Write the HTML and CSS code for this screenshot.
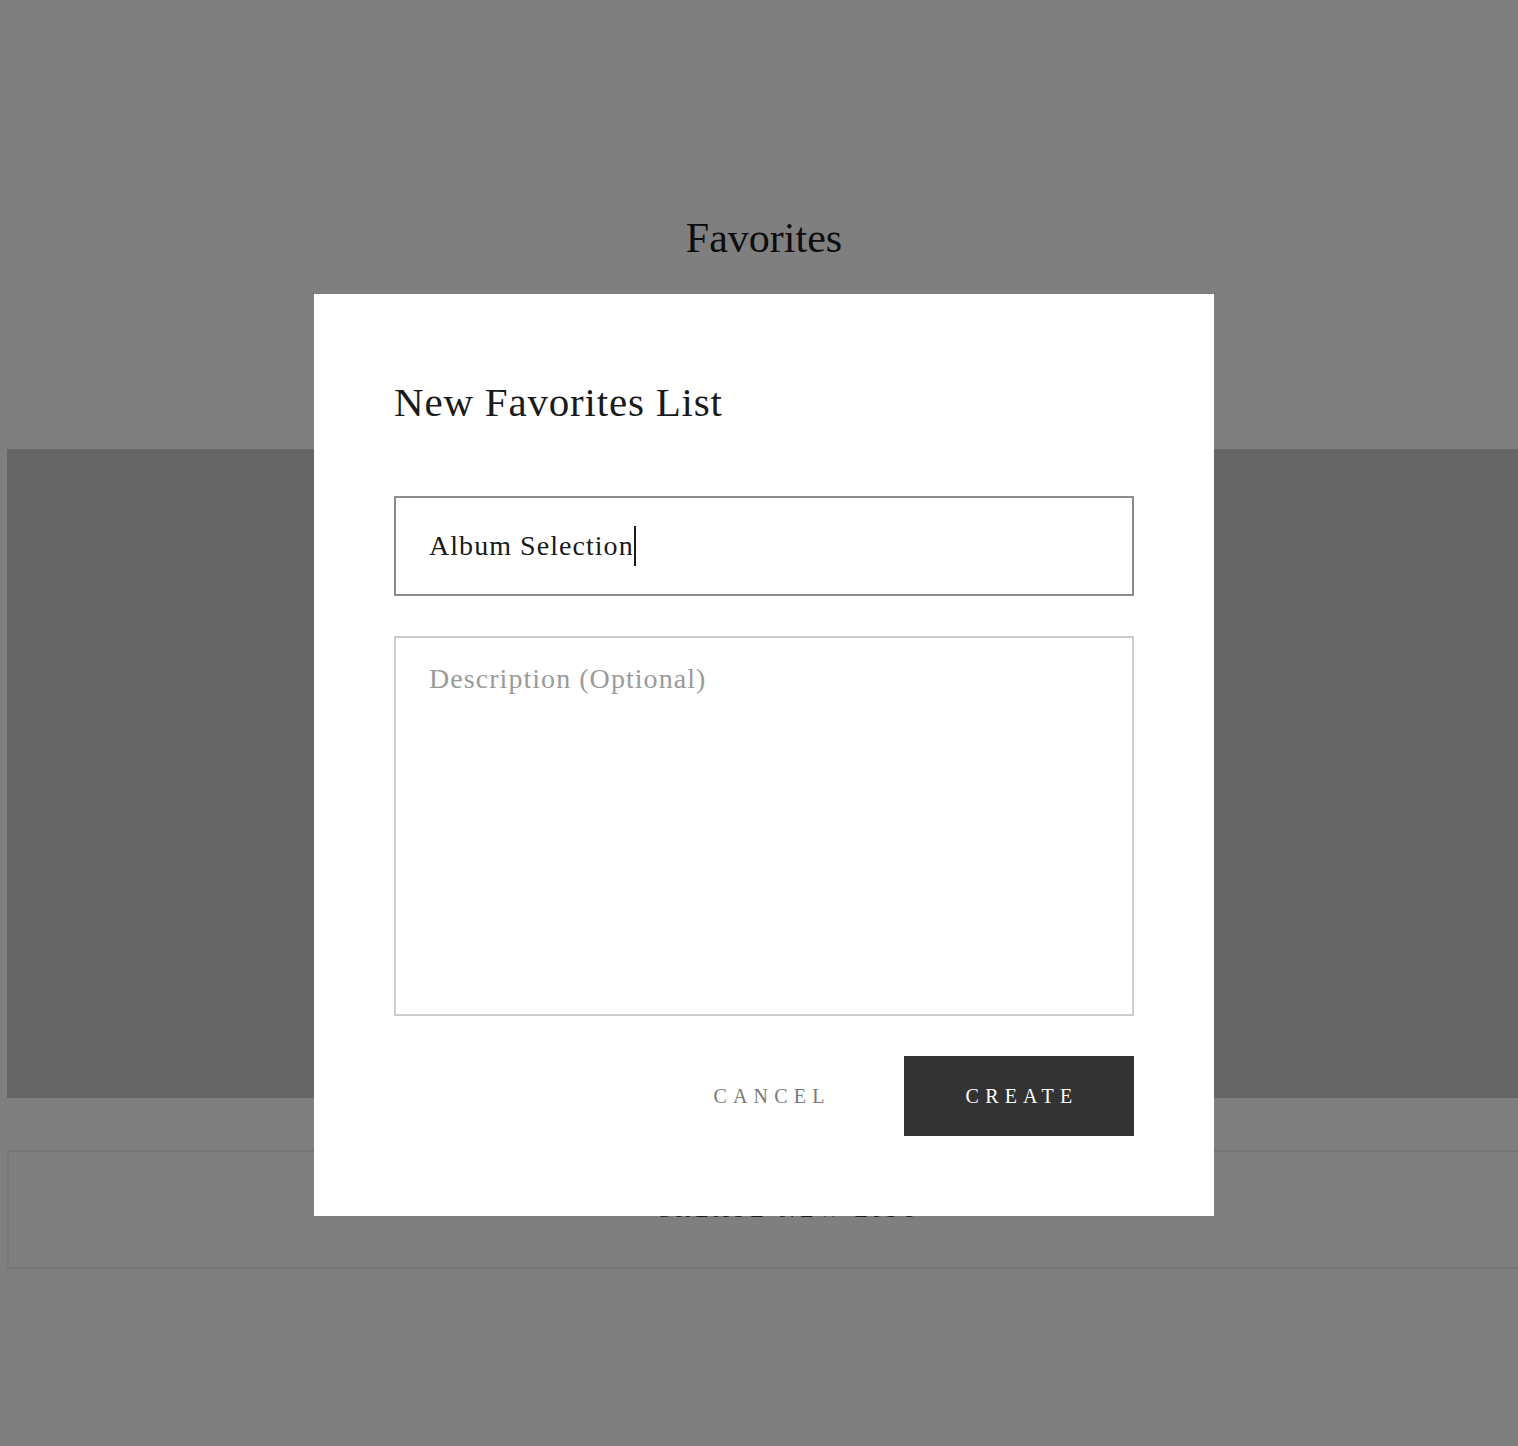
FILE: index.html
```html
<!DOCTYPE html>
<html lang="en">
<head>
<meta charset="utf-8">
<title>Favorites</title>
<link rel="stylesheet" href="styles.css">
</head>
<body>
<div class="page">
  <h1 class="page-title">Favorites</h1>
  <div class="hero"></div>
  <div class="new-list">
    <span class="plus">+</span>
    <span>CREATE NEW LIST</span>
  </div>
</div>
<div class="overlay"></div>
<div class="modal">
  <h2 class="modal-title">New Favorites List</h2>
  <div class="field">
    <span class="field-text">Album Selection</span><span class="caret"></span>
  </div>
  <div class="area">
    <span class="placeholder">Description (Optional)</span>
  </div>
  <div class="actions">
    <button class="btn btn-cancel">CANCEL</button>
    <button class="btn btn-create">CREATE</button>
  </div>
</div>
</body>
</html>
```

FILE: styles.css
```css
html, body {
  margin: 0;
  padding: 0;
  background: #ffffff;
  overflow: hidden;
}
body {
  font-family: "Liberation Serif", "DejaVu Serif", serif;
  color: #1a1a1a;
  width: 1518px;
  height: 1446px;
}
.page {
  width: 1530px;
  margin-left: 7px;
  padding-top: 210px;
}
.page-title {
  margin: 0;
  text-align: center;
  font-weight: 400;
  font-size: 42px;
  line-height: 56px;
  letter-spacing: 0;
  width: 1514px;
}
.hero {
  margin-top: 183px;
  height: 649px;
  background: #cccccc;
}
.new-list {
  margin-top: 52px;
  height: 115px;
  border: 2px solid #ececec;
  display: flex;
  align-items: center;
  justify-content: center;
  gap: 30px;
  width: 1511px;
  font-size: 22px;
  letter-spacing: 5px;
  color: #333;
}
.overlay {
  position: fixed;
  inset: 0;
  background: rgba(0, 0, 0, 0.5);
}
.modal {
  position: absolute;
  left: 314px;
  top: 294px;
  width: 740px;
  padding: 80px;
  background: #ffffff;
  display: flex;
  flex-direction: column;
}
.modal-title {
  margin: 0;
  font-weight: 400;
  font-size: 41px;
  line-height: 50px;
  letter-spacing: 0.8px;
  color: #1a1a1a;
  margin-top: 3px;
}
.field {
  margin-top: 69px;
  height: 96px;
  border: 2px solid #8c8c8c;
  display: flex;
  align-items: center;
  padding-left: 33px;
  font-size: 28px;
  color: #1a1a1a;
}
.field-text {
  letter-spacing: 1.05px;
}
.caret {
  display: inline-block;
  width: 2px;
  height: 40px;
  background: #1a1a1a;
  margin-left: 0;
}
.area {
  margin-top: 40px;
  border: 2px solid #cccccc;
  padding: 25px 33px;
  box-sizing: border-box;
  height: 380px;
}
.placeholder {
  font-size: 28px;
  color: #9a9a9a;
  letter-spacing: 1.05px;
}
.actions {
  margin-top: 40px;
  display: flex;
  justify-content: flex-end;
  gap: 20px;
}
.btn {
  width: 230px;
  height: 80px;
  border: 0;
  font-family: "Liberation Serif", "DejaVu Serif", serif;
  font-size: 20px;
  letter-spacing: 6.2px;
  padding: 0 0 0 6px;
  cursor: pointer;
}
.btn-cancel {
  background: transparent;
  color: #7a7a7a;
}
.btn-create {
  background: #333333;
  color: #ffffff;
}
```
